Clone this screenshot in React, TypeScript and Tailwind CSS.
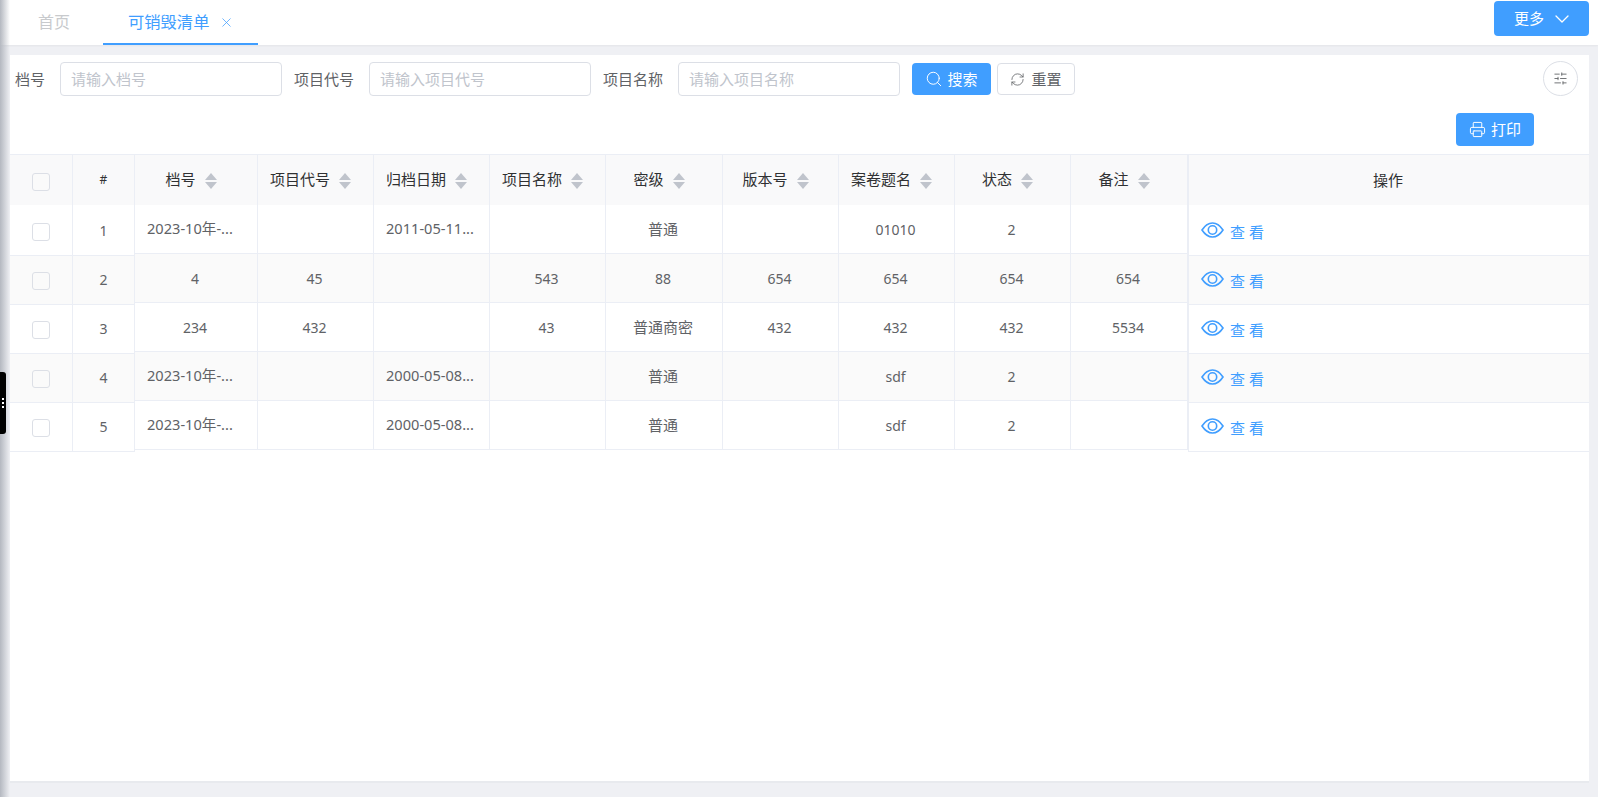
import React from "react";
import { ChevronDown, Printer, RefreshCw, Search, SlidersHorizontal, X } from "lucide-react";

const FONT = "[font-family:'Noto_Sans','Noto_Sans_CJK_SC',sans-serif]";

const cols = [
  { t: "档号", w: "w-[123px]" },
  { t: "项目代号", w: "w-[116px]" },
  { t: "归档日期", w: "w-[116px]" },
  { t: "项目名称", w: "w-[116px]" },
  { t: "密级", w: "w-[117px]" },
  { t: "版本号", w: "w-[116px]" },
  { t: "案卷题名", w: "w-[116px]" },
  { t: "状态", w: "w-[116px]" },
  { t: "备注", w: "w-[117px]" },
];

const rows = [
  ["2023-10年-...", "", "2011-05-11...", "", "普通", "", "01010", "2", ""],
  ["4", "45", "", "543", "88", "654", "654", "654", "654"],
  ["234", "432", "", "43", "普通商密", "432", "432", "432", "5534"],
  ["2023-10年-...", "", "2000-05-08...", "", "普通", "", "sdf", "2", ""],
  ["2023-10年-...", "", "2000-05-08...", "", "普通", "", "sdf", "2", ""],
];

function cellClass(v: string) {
  if (v.endsWith("...")) return "justify-start pl-[12px] text-[14.6px]";
  if (v.startsWith("普通")) return "justify-center pr-[2px] text-[15px]";
  return "justify-center pr-[2px] text-[14px]";
}

function Caret() {
  return (
    <svg width="12" height="16" viewBox="0 0 12 16" className="ml-[9px] mr-[10px] mt-[1px] shrink-0">
      <path d="M6 0L12 7H0Z" fill="#c0c4cc" />
      <path d="M0 9H12L6 16Z" fill="#c0c4cc" />
    </svg>
  );
}

function Box({ extra = "bg-white" }: { extra?: string }) {
  return <span className={`block h-[18px] w-[18px] rounded-[3px] border border-[#dcdfe6] ${extra}`} />;
}

function EyeIcon() {
  return (
    <svg width="23" height="16" viewBox="0 0 23 16" fill="none" stroke="#409eff" strokeWidth="1.6">
      <path d="M1 8C4 3.4 7.4 1 11.500 1S19 3.4 22 8C19 12.600 15.600 15 11.500 15S4 12.600 1 8Z" />
      <circle cx="11.500" cy="8" r="4.200" />
    </svg>
  );
}

function Field({ label, ph, labelW, w }: { label: string; ph: string; labelW: string; w: string }) {
  return (
    <>
      <span className={`${labelW} -mt-[1px] shrink-0 text-[15px] leading-[30px] text-[#606266]`}>{label}</span>
      <input
        readOnly
        placeholder={ph}
        className={`${w} h-[34px] shrink-0 rounded-[4px] border border-[#dcdfe6] bg-white px-[10px] text-[15px] outline-none placeholder:text-[#c0c4cc]`}
      />
    </>
  );
}

export default function App() {
  return (
    <div className={`relative flex h-[797px] w-full flex-col overflow-hidden bg-[#eff0f4] ${FONT}`}>
      {/* Tab bar */}
      <div className="flex h-[45px] shrink-0 items-start justify-between bg-white pr-[9px] shadow-[0_1px_2px_rgba(0,0,0,0.05)]">
        <div className="flex h-[45px]">
          <div className="ml-[38px] w-[65px] text-[16px] leading-[44px] text-[#c8cacd]">首页</div>
          <div className="flex h-[45px] w-[155px] items-start border-b-2 border-[#409eff] pl-[25px] text-[#409eff]">
            <span className="text-[16.3px] leading-[44px]">可销毁清单</span>
            <X size={15} strokeWidth={1.2} className="ml-[10px] mt-[15px]" />
          </div>
        </div>
        <button className="mt-[1px] flex h-[35px] w-[95px] items-center rounded-[4px] bg-[#409eff] pl-[20px] text-[15px] text-white">
          更多
          <ChevronDown size={24} strokeWidth={1.3} className="ml-[6px]" />
        </button>
      </div>

      {/* Main panel */}
      <div className="ml-[10px] mr-[9px] mt-[10px] flex h-[728px] shrink-0 flex-col border-b-2 border-[#e8eaee] bg-white">
        {/* Filter row */}
        <div className="flex h-[41px] shrink-0 items-start justify-between pl-[5px] pr-[11px] pt-[7px]">
          <div className="flex items-center">
            <Field label="档号" ph="请输入档号" labelW="w-[45px]" w="w-[222px]" />
            <span className="w-[12px]" />
            <Field label="项目代号" ph="请输入项目代号" labelW="w-[75px]" w="w-[222px]" />
            <span className="w-[12px]" />
            <Field label="项目名称" ph="请输入项目名称" labelW="w-[75px]" w="w-[222px]" />
            <button className="ml-[12px] flex h-[32px] w-[79px] items-center justify-center gap-[4px] rounded-[4px] bg-[#409eff] text-[15px] text-white">
              <Search size={18} strokeWidth={1.3} />
              搜索
            </button>
            <button className="ml-[6px] flex h-[32px] w-[78px] items-center justify-center gap-[6px] rounded-[4px] border border-[#dcdfe6] bg-white text-[15px] text-[#606266]">
              <RefreshCw size={15} strokeWidth={1.3} />
              重置
            </button>
          </div>
          <button className="-mt-[1px] flex h-[35px] w-[35px] items-center justify-center rounded-full border border-[#dcdfe6] bg-white text-[#606266]">
            <SlidersHorizontal size={15} strokeWidth={1.4} />
          </button>
        </div>

        {/* Print */}
        <div className="flex shrink-0 justify-end pr-[55px] pt-[17px]">
          <button className="flex h-[33px] w-[78px] items-center justify-center gap-[5px] rounded-[4px] bg-[#409eff] text-[15px] text-white">
            <Printer size={17} strokeWidth={1.4} />
            打印
          </button>
        </div>

        {/* Table */}
        <div className="mt-[8px] flex items-start border-t border-[#ebeef5]">
          {/* fixed left */}
          <div className="flex w-[125px] shrink-0 flex-col">
            <div className="flex h-[50px] bg-[#f9f9fa]">
              <div className="flex w-[63px] items-center justify-center border-r border-[#ebeef5] pt-[4px]">
                <Box extra="bg-[#fafafa]" />
              </div>
              <div className="flex w-[62px] items-center justify-center border-r border-[#ebeef5] text-[12px] text-[#303133]">
                #
              </div>
            </div>
            {rows.map((_, i) => (
              <div key={i} className={`flex ${i === 0 ? "h-[51px]" : "h-[49px]"} border-b border-[#ebeef5] ${i % 2 ? "bg-[#fafafa]" : "bg-white"}`}>
                <div className={`flex w-[63px] items-center justify-center border-r border-[#ebeef5] ${i === 0 ? "pt-[4px]" : "pt-[2px]"}`}>
                  <Box extra={i % 2 ? "bg-[#fafafa]" : "bg-white"} />
                </div>
                <div className={`flex w-[62px] items-center justify-center border-r border-[#ebeef5] text-[14px] text-[#606266] ${i === 0 ? "" : "pb-[2px]"}`}>
                  {i + 1}
                </div>
              </div>
            ))}
          </div>

          {/* main */}
          <div className="flex w-[1053px] shrink-0 flex-col">
            <div className="flex h-[50px] bg-[#f9f9fa]">
              {cols.map((c) => (
                <div key={c.t} className={`${c.w} flex items-center justify-center border-r border-[#ebeef5] text-[15px] text-[#303133]`}>
                  <span className="-mt-[2px]">{c.t}</span>
                  <Caret />
                </div>
              ))}
            </div>
            {rows.map((r, i) => (
              <div key={i} className={`flex h-[49px] border-b border-[#ebeef5] ${i % 2 ? "bg-[#fafafa]" : "bg-white"}`}>
                {r.map((v, j) => (
                  <div key={j} className={`${cols[j].w} flex items-center border-r border-[#ebeef5] text-[#606266] ${cellClass(v)}`}>
                    {v}
                  </div>
                ))}
              </div>
            ))}
          </div>

          {/* fixed right */}
          <div className="flex min-w-0 flex-1 flex-col border-l border-[#ebeef5]">
            <div className="flex h-[50px] items-center justify-center bg-[#f9f9fa] pr-[2px] text-[15px] text-[#303133]">操作</div>
            {rows.map((_, i) => (
              <div key={i} className={`flex ${i === 0 ? "h-[51px]" : "h-[49px] pb-[2px]"} items-center border-b border-[#ebeef5] pl-[12px] ${i % 2 ? "bg-[#fafafa]" : "bg-white"}`}>
                <EyeIcon />
                <span className="ml-[6px] mt-[4px] text-[15px] text-[#409eff]">查 看</span>
              </div>
            ))}
          </div>
        </div>
      </div>

      {/* Shadow of the collapsed side panel */}
      <div className="pointer-events-none absolute inset-y-0 left-0 w-[10px] bg-gradient-to-r from-[#b4b8c0] to-transparent" />
      {/* Drag handle */}
      <div className="absolute left-0 top-[372px] flex h-[62px] w-[6px] flex-col items-center justify-center gap-[2px] rounded-r-[3px] bg-black">
        <span className="h-[2px] w-[2px] bg-white" />
        <span className="h-[2px] w-[2px] bg-white" />
        <span className="h-[2px] w-[2px] bg-white" />
      </div>
    </div>
  );
}
